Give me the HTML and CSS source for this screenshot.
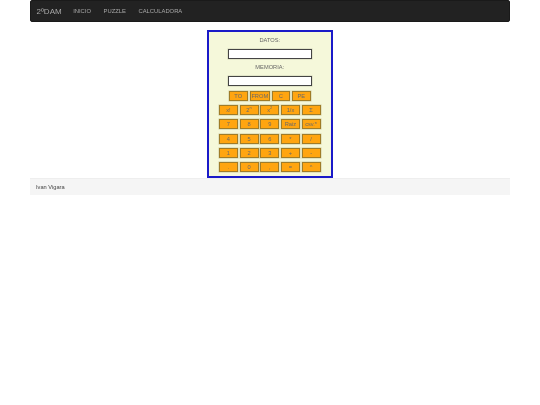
FILE: index.html
```html
<!DOCTYPE html>
<html lang="es">
<head>
<meta charset="utf-8">
<title>Calculadora</title>
<link rel="stylesheet" href="styles.css">
</head>
<body>
<div class="container">
  <nav class="navbar">
    <a class="brand">2ºDAM</a>
    <a class="link">INICIO</a>
    <a class="link">PUZZLE</a>
    <a class="link">CALCULADORA</a>
  </nav>
  <main class="calc">
    <label class="lbl">DATOS:</label>
    <input class="field" type="text">
    <label class="lbl second">MEMORIA:</label>
    <input class="field" type="text">
    <div class="top-row">
      <button class="key">TO</button>
      <button class="key">FROM</button>
      <button class="key">C</button>
      <button class="key">PE</button>
    </div>
    <div class="grid">
      <button class="key">x!</button><button class="key">2<sup>n</sup></button><button class="key">x<sup>2</sup></button><button class="key">1/x</button><button class="key">Σ</button>
      <button class="key">7</button><button class="key">8</button><button class="key">9</button><button class="key">Raiz</button><button class="key">csv.*</button>
      <button class="key">4</button><button class="key">5</button><button class="key">6</button><button class="key">*</button><button class="key">/</button>
      <button class="key">1</button><button class="key">2</button><button class="key">3</button><button class="key">+</button><button class="key">-</button>
      <button class="key">.</button><button class="key">0</button><button class="key">,</button><button class="key">=</button><button class="key">^</button>
    </div>
  </main>
  <footer class="footer">Ivan Vigara</footer>
</div>
</body>
</html>
```
FILE: styles.css
```css
* { box-sizing: border-box; }
html, body { margin: 0; padding: 0; background: #fff; }
body { font-family: "Liberation Sans", Arial, sans-serif; color: #555; }
.container { width: 480.5px; margin-left: 29.5px; filter: blur(0.3px); }
.navbar {
  height: 22px;
  background: #222;
  border: 1px solid #1a1a1a;
  border-radius: 2px;
  display: flex;
  align-items: center;
  padding-left: 6px;
  color: #a8a8a8;
}
.brand { font-size: 8px; margin-right: 11.5px; }
.link { font-size: 5.85px; margin-right: 12.5px; }
.calc {
  width: 126px;
  height: 148px;
  margin: 8px auto 0;
  background: #f5f8da;
  border: 2px solid #1a1ac8;
  display: flex;
  flex-direction: column;
  align-items: center;
  padding-top: 5px;
}
.lbl { font-size: 5.7px; line-height: 7px; height: 7px; color: #666; }
.second { margin-top: 5.5px; }
.field {
  display: block;
  width: 84px;
  height: 10px;
  margin-top: 4.5px;
  padding: 0;
  background: #fff;
  border: 1px solid #444;
  border-radius: 0;
  box-shadow: 0 0 0 0.5px rgba(120, 120, 100, 0.3);
}
.key {
  height: 10px;
  padding: 0;
  font-family: "Liberation Sans", Arial, sans-serif;
  font-size: 5.7px;
  line-height: 8px;
  color: #6a6a6a;
  background: #ffa510;
  border: 1px solid #a07c28;
  border-radius: 0;
  box-shadow: 0 0 0 0.5px rgba(140, 120, 60, 0.35);
}
.key sup { font-size: 4px; line-height: 0; }
.top-row {
  display: grid;
  grid-template-columns: 19px 20px 18px 19px;
  gap: 2px;
  margin-top: 5px;
}
.grid {
  display: grid;
  grid-template-columns: repeat(5, 19px);
  grid-auto-rows: 10px;
  column-gap: 1.7px;
  row-gap: 4.3px;
  margin-top: 4.5px;
}
.footer {
  height: 17px;
  background: #f5f5f5;
  border-top: 1px solid #eee;
  font-size: 5.7px;
  line-height: 16px;
  color: #444;
  padding-left: 6.5px;
}
```
